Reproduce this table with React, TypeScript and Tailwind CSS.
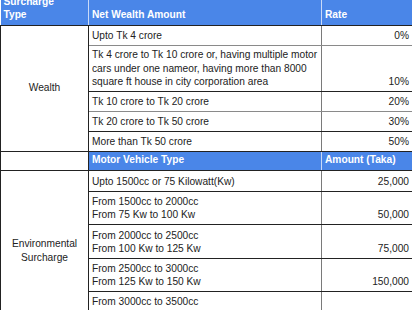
import React from "react";

type Row = { label: string[]; value: string; h: string; line: string };

const wealthRows: Row[] = [
  { label: ["Upto Tk 4 crore"], value: "0%", h: "h-[20px]", line: "border-b-[#8a8a8a]" },
  {
    label: [
      "Tk 4 crore to Tk 10 crore or, having multiple motor",
      "cars under one nameor, having more than 8000",
      "square ft house in city corporation area",
    ],
    value: "10%",
    h: "h-[46px]",
    line: "border-b-[#222]",
  },
  { label: ["Tk 10 crore to Tk 20 crore"], value: "20%", h: "h-[20px]", line: "border-b-[#8a8a8a]" },
  { label: ["Tk 20 crore to Tk 50 crore"], value: "30%", h: "h-[20px]", line: "border-b-[#222]" },
  { label: ["More than Tk 50 crore"], value: "50%", h: "h-[20px]", line: "border-b-[#222]" },
];

const vehicleRows: Row[] = [
  { label: ["Upto 1500cc or 75 Kilowatt(Kw)"], value: "25,000", h: "h-[21px]", line: "border-b-[#222]" },
  { label: ["From 1500cc to 2000cc", "From 75 Kw to 100 Kw"], value: "50,000", h: "h-[33px]", line: "border-b-[#222]" },
  { label: ["From 2000cc to 2500cc", "From 100 Kw to 125 Kw"], value: "75,000", h: "h-[34px]", line: "border-b-[#222]" },
  { label: ["From 2500cc to 3000cc", "From 125 Kw to 150 Kw"], value: "150,000", h: "h-[33px]", line: "border-b-[#222]" },
  { label: ["From 3000cc to 3500cc", "From 150 Kw to 175 Kw"], value: "200,000", h: "h-[33px]", line: "border-b-[#222]" },
];

const cell = "border border-[#7a7a7a] px-[3px] pb-[2px] align-bottom";
const head = "bg-[#4a86e8] text-white font-bold px-[3px] pb-[3px] align-bottom text-left";

const BodyRows = ({ rows, first, pad }: { rows: Row[]; first: string[]; pad: string }) => (
  <>
    {rows.map((r, i) => (
      <tr key={i} className={r.h}>
        {i === 0 && (
          <td
            rowSpan={rows.length}
            className={`border border-[#222] text-center align-middle px-[3px] ${pad}`}
          >
            {first.map((t) => (
              <div key={t}>{t}</div>
            ))}
          </td>
        )}
        <td className={`${cell} ${r.line}`}>
          {r.label.map((t) => (
            <div key={t} className="whitespace-nowrap">
              {t}
            </div>
          ))}
        </td>
        <td className={`${cell} ${r.line} text-right border-r-[#222]`}>{r.value}</td>
      </tr>
    ))}
  </>
);

const App = () => {
  return (
    <div className="w-[412px] h-[310px] overflow-hidden bg-white">
      <table
        className="-mt-[8px] w-[412px] table-fixed border-collapse text-[10.2px] leading-[13.5px] text-[#222]"
        style={{ fontFamily: '"Liberation Sans", Arial, sans-serif' }}
      >
        <colgroup>
          <col className="w-[88px]" />
          <col className="w-[233px]" />
          <col className="w-[91px]" />
        </colgroup>
        <tbody>
          <tr className="h-[33px]">
            <th className={`${head} border-r border-r-[#c9daf8] border-b border-b-[#222]`}>
              <div>Surcharge</div>
              <div>Type</div>
            </th>
            <th className={`${head} border-r border-r-[#c9daf8] border-b border-b-[#222]`}>
              Net Wealth Amount
            </th>
            <th className={`${head} border-b border-b-[#222]`}>Rate</th>
          </tr>
          <BodyRows rows={wealthRows} first={["Wealth"]} pad="" />
          <tr className="h-[19px]">
            <td className="border border-[#222] bg-white" />
            <td className={`${head} border-y border-y-[#222] border-r border-r-[#c9daf8] pb-[2px]`}>
              Motor Vehicle Type
            </td>
            <td className={`${head} border-y border-y-[#222] pb-[2px]`}>Amount (Taka)</td>
          </tr>
          <BodyRows rows={vehicleRows} first={["Environmental", "Surcharge"]} pad="pt-[7px]" />
        </tbody>
      </table>
    </div>
  );
};

export default App;
